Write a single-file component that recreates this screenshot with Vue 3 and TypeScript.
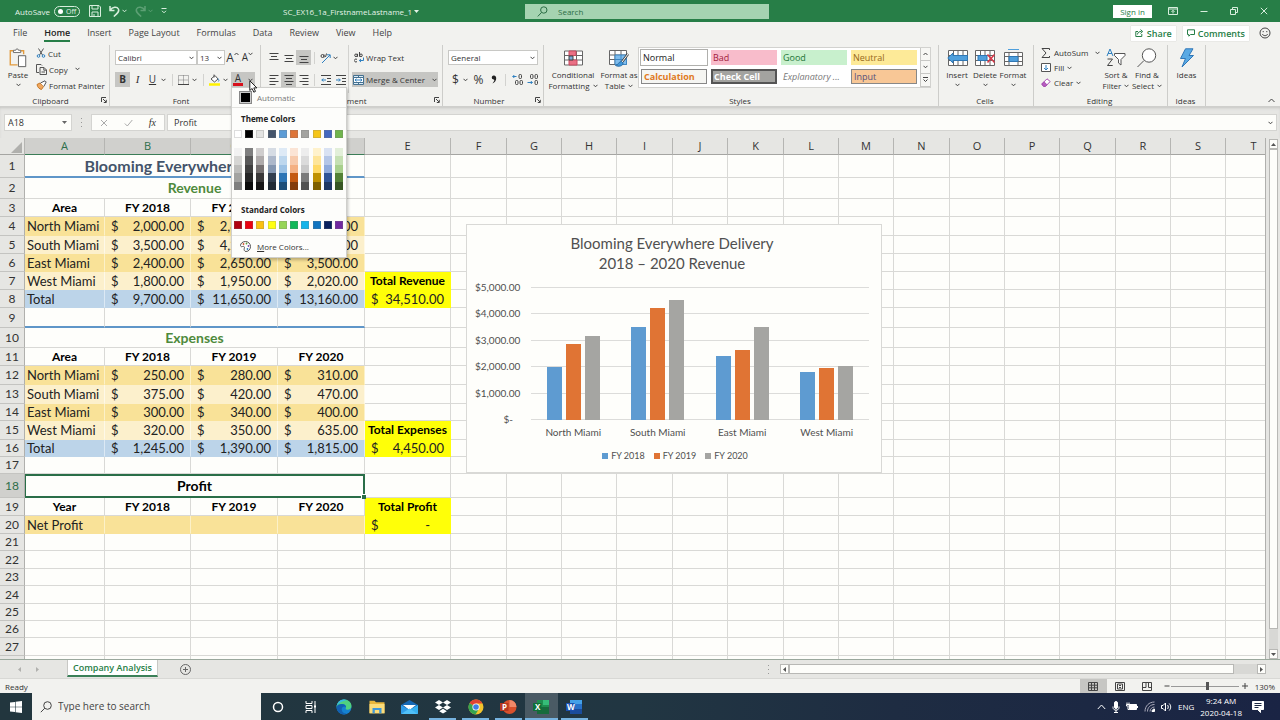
<script setup lang="ts">
import { computed, ref } from 'vue'

interface Cell {
  kind: string
  text?: string
  span?: number
}
interface Row {
  n: number | string
  h: number
  cells: Cell[]
}

const menuTabs = ['File', 'Home', 'Insert', 'Page Layout', 'Formulas', 'Data', 'Review', 'View', 'Help']
const cellStyles = [
  { name: 'Normal', cls: 'normal' },
  { name: 'Bad', cls: 'bad' },
  { name: 'Good', cls: 'good' },
  { name: 'Neutral', cls: 'neutral' },
  { name: 'Calculation', cls: 'calculation' },
  { name: 'Check Cell', cls: 'check' },
  { name: 'Explanatory ...', cls: 'explanatory' },
  { name: 'Input', cls: 'input' },
]

const themeColors = [
  { base: '#ffffff', shades: ['#f2f2f2', '#d6d6d4', '#bdbdbb', '#a3a3a1', '#7f7f7f'] },
  { base: '#000000', shades: ['#7f7f7f', '#595959', '#3f3f3f', '#262626', '#0c0c0c'] },
  { base: '#e4e4e2', shades: ['#cfcdcd', '#aeaaaa', '#757070', '#3a3838', '#171616'] },
  { base: '#44546a', shades: ['#d6dce4', '#adb8ca', '#8496b0', '#333f4f', '#222b35'] },
  { base: '#5b9bd5', shades: ['#deeaf6', '#bdd7ee', '#9cc2e5', '#2e75b5', '#1e4e79'] },
  { base: '#dd7539', shades: ['#fbe4d5', '#f7caac', '#f4b083', '#c45911', '#833c0b'] },
  { base: '#a3a3a0', shades: ['#ededed', '#dbdbdb', '#c9c9c9', '#7b7b7b', '#525252'] },
  { base: '#f5c518', shades: ['#fff2cc', '#fee599', '#ffd965', '#bf9000', '#7f6000'] },
  { base: '#4468bf', shades: ['#d9e2f3', '#b4c6e7', '#8eaadb', '#2f5496', '#1f3864'] },
  { base: '#70b54d', shades: ['#e2efd9', '#c5e0b3', '#a8d08d', '#538135', '#375623'] },
]
const standardColors = [
  '#b00010', '#ea0010', '#fbc010', '#ffff10', '#96d556', '#10b858', '#12b4ea', '#1074c0', '#08205e', '#7028a0',
]

const columns = [
  { name: 'A', w: 80 }, { name: 'B', w: 86 }, { name: 'C', w: 87 }, { name: 'D', w: 87 }, { name: 'E', w: 86 },
  { name: 'F', w: 56 }, { name: 'G', w: 55 }, { name: 'H', w: 55 }, { name: 'I', w: 56 }, { name: 'J', w: 55 },
  { name: 'K', w: 56 }, { name: 'L', w: 55 }, { name: 'M', w: 55 }, { name: 'N', w: 56 }, { name: 'O', w: 55 },
  { name: 'P', w: 55 }, { name: 'Q', w: 56 }, { name: 'R', w: 55 }, { name: 'S', w: 55 }, { name: 'T', w: 56 },
]
const tableWidth = computed(() => columns.reduce((sum, c) => sum + c.w, 25))

const blank: Cell = { kind: '' }
function head(...t: string[]): Cell[] {
  return t.map((text) => ({ kind: 'head', text }))
}
function data(fill: string, label: string, values: string[]): Cell[] {
  return [{ kind: `${fill} label`, text: label }, ...values.map((text) => ({ kind: `${fill} money`, text }))]
}

const rows: Row[] = [
  { n: 1, h: 23, cells: [{ kind: 'title', text: 'Blooming Everywhere Delivery', span: 4 }, blank] },
  { n: 2, h: 21, cells: [{ kind: 'section', text: 'Revenue', span: 4 }, blank] },
  { n: 3, h: 18, cells: [...head('Area', 'FY 2018', 'FY 2019', 'FY 2020'), blank] },
  { n: 4, h: 19, cells: [...data('dark', 'North Miami', ['2,000.00', '2,850.00', '3,140.00']), blank] },
  { n: 5, h: 18, cells: [...data('light', 'South Miami', ['3,500.00', '4,200.00', '4,500.00']), blank] },
  { n: 6, h: 18, cells: [...data('dark', 'East Miami', ['2,400.00', '2,650.00', '3,500.00']), blank] },
  { n: 7, h: 18, cells: [...data('light', 'West Miami', ['1,800.00', '1,950.00', '2,020.00']), { kind: 'bright head', text: 'Total Revenue' }] },
  { n: 8, h: 18, cells: [...data('blue', 'Total', ['9,700.00', '11,650.00', '13,160.00']), { kind: 'bright money', text: '34,510.00' }] },
  { n: 9, h: 20, cells: [{ kind: 'ruled' }, { kind: 'ruled' }, { kind: 'ruled' }, { kind: 'ruled' }, blank] },
  { n: 10, h: 20, cells: [{ kind: 'section', text: 'Expenses', span: 4 }, blank] },
  { n: 11, h: 18, cells: [...head('Area', 'FY 2018', 'FY 2019', 'FY 2020'), blank] },
  { n: 12, h: 19, cells: [...data('dark', 'North Miami', ['250.00', '280.00', '310.00']), blank] },
  { n: 13, h: 19, cells: [...data('light', 'South Miami', ['375.00', '420.00', '470.00']), blank] },
  { n: 14, h: 17, cells: [...data('dark', 'East Miami', ['300.00', '340.00', '400.00']), blank] },
  { n: 15, h: 19, cells: [...data('light', 'West Miami', ['320.00', '350.00', '635.00']), { kind: 'bright head', text: 'Total Expenses' }] },
  { n: 16, h: 17, cells: [...data('blue', 'Total', ['1,245.00', '1,390.00', '1,815.00']), { kind: 'bright money', text: '4,450.00' }] },
  { n: 17, h: 17, cells: [blank, blank, blank, blank, blank] },
  { n: 18, h: 24, cells: [{ kind: 'selected', text: 'Profit', span: 4 }, blank] },
  { n: 19, h: 18, cells: [...head('Year', 'FY 2018', 'FY 2019', 'FY 2020'), { kind: 'bright head', text: 'Total Profit' }] },
  { n: 20, h: 18, cells: [{ kind: 'dark label', text: 'Net Profit' }, { kind: 'dark' }, { kind: 'dark' }, { kind: 'dark' }, { kind: 'bright money dash', text: '-' }] },
  ...[17, 18, 17, 18, 17, 17, 18].map((h, i) => ({ n: 21 + i, h, cells: [blank, blank, blank, blank, blank] })),
  { n: '', h: 18, cells: [blank, blank, blank, blank, blank] },
]

const axis = ['$5,000.00', '$4,000.00', '$3,000.00', '$2,000.00', '$1,000.00', '$-']
const series = ['FY 2018', 'FY 2019', 'FY 2020']
const areas = [
  { name: 'North Miami', values: [2000, 2850, 3140] },
  { name: 'South Miami', values: [3500, 4200, 4500] },
  { name: 'East Miami', values: [2400, 2650, 3500] },
  { name: 'West Miami', values: [1800, 1950, 2020] },
]

const fontName = ref('Calibri')
const fontSize = ref('13')
const numberFormat = ref('General')
const cellRef = ref('A18')
const formula = ref('Profit')
const zoom = ref(55)
</script>

<template>
  <div class="window">
    <header class="titlebar">
      <div class="quick">
        <label class="autosave">AutoSave
          <span class="toggle"><input type="checkbox" aria-label="AutoSave" /><i></i>Off</span>
        </label>
        <button class="bare save" aria-label="Save">
          <svg width="12" height="12" viewBox="0 0 12 12"><path d="M.5.5h9.5l1.500 1.500v9.500H.5zM3 .5v3.500h6V.5M3 11.500V7h6v4.500M5 9v2" /></svg>
        </button>
        <button class="bare undo" aria-label="Undo">
          <svg width="11" height="12" viewBox="0 0 11 12"><path class="thick" d="M1 1v4.500h4.500M1.200 5.200C3.500 1.600 8 1.200 9.400 4c1.200 2.600-1 4.600-4.600 7.500" /></svg>
        </button>
        <svg class="chev" viewBox="0 0 5 4"><path d="M.5.8l2 2 2-2" /></svg>
        <button class="bare redo" aria-label="Redo">
          <svg width="11" height="12" viewBox="0 0 11 12"><path class="thick" d="M10 1v4.500H5.500M9.800 5.200C7.500 1.600 3 1.200 1.600 4c-1.200 2.600 1 4.600 4.600 7.500" /></svg>
          <svg class="chev" viewBox="0 0 5 4"><path d="M.5.8l2 2 2-2" /></svg>
        </button>
        <button class="bare custom" aria-label="Customize toolbar">
          <svg width="6" height="6" viewBox="0 0 6 6"><path d="M.5.5h5M1 2.800l2 2 2-2" /></svg>
        </button>
      </div>
      <div class="docname">SC_EX16_1a_FirstnameLastname_1 <svg class="caret" viewBox="0 0 5 3"><path d="M0 0h5L2.500 3z" /></svg></div>
      <label class="search">
        <svg width="11" height="11" viewBox="0 0 11 11"><circle cx="6.800" cy="4" r="3.200" /><path d="M4.500 6.500L.8 10.400" /></svg>
        <input type="text" placeholder="Search" aria-label="Search" />
      </label>
      <div class="wincontrols">
        <button class="signin">Sign in</button>
        <button class="bare" aria-label="Ribbon display options"><svg width="10" height="8" viewBox="0 0 10 8"><path d="M.5.5h9v7h-9zM.5 2h9M5 6.500V3.500M3.500 4.800L5 3.300l1.500 1.500" /></svg></button>
        <button class="bare" aria-label="Minimize"><svg width="8" height="8" viewBox="0 0 8 8"><path d="M.5 4.500h7" /></svg></button>
        <button class="bare" aria-label="Restore"><svg width="8" height="8" viewBox="0 0 8 8"><path d="M.5 2.500h5v5h-5zM2.500 2.500v-2h5v5h-2" /></svg></button>
        <button class="bare" aria-label="Close"><svg width="8" height="8" viewBox="0 0 8 8"><path d="M.8.8l6.400 6.400M7.200.8L.8 7.200" /></svg></button>
      </div>
    </header>

    <nav class="menutabs">
      <button v-for="t in menuTabs" :key="t" class="bare menutab" :class="{ current: t === 'Home' }">{{ t }}</button>
      <div class="sharing">
        <button class="share"><svg width="9" height="8" viewBox="0 0 9 8"><path d="M3 2.500H.8v5h6V5M2.500 5.500c.2-2.400 1.800-3 4-3M5.500.6l2.200 1.900-2.200 2" /></svg>Share</button>
        <button class="share"><svg width="8" height="8" viewBox="0 0 8 8"><path d="M.5.8h7v4.700H3.500L1.800 7.200V5.500H.5z" /></svg>Comments</button>
        <button class="bare smile" aria-label="Feedback"><svg width="12" height="12" viewBox="0 0 12 12"><circle cx="6" cy="6" r="5" /><path d="M4.200 4v1.200M7.800 4v1.200M3.300 7c1 2.200 4.400 2.200 5.400 0" /></svg></button>
      </div>
    </nav>

    <section class="ribbon">
      <div class="group clipboard">
        <div class="body">
          <button class="bare big paste">
            <svg width="20" height="22" viewBox="0 0 20 22"><path d="M5 3H1.500v15.500h8" stroke="#e29a3c" stroke-width="1.500" /><path d="M13 3h3.200v4" stroke="#e29a3c" stroke-width="1.500" /><path d="M5 5V2.500h2.500a1.500 1.500 0 013 0H13V5z" fill="#fff" stroke="#666" /><path d="M10.500 8.500h8v12h-8z" fill="#fff" stroke="#555" /></svg>
            <span>Paste</span>
            <svg class="chev" viewBox="0 0 5 4"><path d="M.5.8l2 2 2-2" /></svg>
          </button>
          <div class="list">
            <button class="bare"><svg width="10" height="10" viewBox="0 0 10 10"><path d="M2.500.5l4 6.500M7.500.5l-4 6.500" stroke="#555" /><circle cx="2.500" cy="8" r="1.300" stroke="#2f80c0" /><circle cx="7.500" cy="8" r="1.300" stroke="#2f80c0" /></svg>Cut</button>
            <button class="bare copy"><svg width="11" height="11" viewBox="0 0 11 11"><path d="M3 8.500H.5v-8h4.500L6 1.500M4 3.500h4l2.500 2.500v4.500H4zM7.800 3.500v2.700h2.700M5.500 8h3.500" stroke="#555" /></svg>Copy <svg class="chev" viewBox="0 0 5 4"><path d="M.5.8l2 2 2-2" /></svg></button>
            <button class="bare"><svg width="11" height="10" viewBox="0 0 11 10"><path d="M1 4.500l3-1.500 3.500 3.500-2 3C3.500 9 1.500 7.500 1 4.500z" fill="#f0a860" stroke="#c67826" /><path d="M4.500 3L9 .8l1.200 1.200L7.800 6.500" fill="#fff" stroke="#555" /></svg>Format Painter</button>
          </div>
        </div>
        <div class="caption"><span>Clipboard</span><svg class="launch" viewBox="0 0 6 6"><path d="M.5 5V.5H5M2 2l3 3M5.300 2.800v2.700H2.800" /></svg></div>
      </div>

      <div class="group font">
        <div class="body rows">
          <div class="line">
            <span class="pick fontname"><select v-model="fontName" aria-label="Font"><option>Calibri</option></select><svg class="chev" viewBox="0 0 5 4"><path d="M.5.8l2 2 2-2" /></svg></span>
            <span class="pick fontsize"><select v-model="fontSize" aria-label="Font size"><option>13</option></select><svg class="chev" viewBox="0 0 5 4"><path d="M.5.8l2 2 2-2" /></svg></span>
            <button class="bare tool grow" aria-label="Increase font size">A<svg class="tick" viewBox="0 0 5 4"><path d="M.5 3l2-2 2 2" /></svg></button>
            <button class="bare tool shrink" aria-label="Decrease font size">A<svg class="tick" viewBox="0 0 5 4"><path d="M.5.8l2 2 2-2" /></svg></button>
          </div>
          <div class="line">
            <button class="bare tool on"><b>B</b></button>
            <button class="bare tool"><i class="ital">I</i></button>
            <button class="bare tool"><u>U</u></button>
            <svg class="chev" viewBox="0 0 5 4"><path d="M.5.8l2 2 2-2" /></svg>
            <span class="bar"></span>
            <button class="bare tool" aria-label="Borders"><svg width="11" height="10" viewBox="0 0 11 10"><path d="M.5.5h10v9H.5zM5.500.5v9M.5 5h10" stroke="#777" stroke-dasharray="1 1" /><path d="M0 9.500h11" stroke="#444" /></svg></button>
            <svg class="chev" viewBox="0 0 5 4"><path d="M.5.8l2 2 2-2" /></svg>
            <span class="bar"></span>
            <button class="bare tool" aria-label="Fill color"><svg width="11" height="12" viewBox="0 0 11 12"><path d="M2 5l4-3.500L9 5 5.500 8zM5 .5v3" fill="#fff" stroke="#555" /><path d="M9 4.500c1 1.500 1.200 2.500.3 3" stroke="#2f80c0" /><path d="M0 10.500h11" stroke="#fff200" stroke-width="2.500" /></svg></button>
            <svg class="chev" viewBox="0 0 5 4"><path d="M.5.8l2 2 2-2" /></svg>
            <div class="fontcolor">
              <button class="bare inkbtn" aria-label="Font color"><span class="ink">A</span><svg class="chev" viewBox="0 0 5 4"><path d="M.5.8l2 2 2-2" /></svg></button>
              <svg class="pointer" width="9" height="13" viewBox="0 0 9 13"><path d="M.8.8v9.700l2.300-2 1.700 3.700 1.700-.8-1.700-3.500h3.100z" fill="#fff" stroke="#222" /></svg>
              <div class="palette">
                <button class="bare auto"><i></i>Automatic</button>
                <h3>Theme Colors</h3>
                <div class="swatches">
                  <button v-for="c in themeColors" :key="c.base" class="swatch" :style="{ background: c.base }" :aria-label="c.base"></button>
                </div>
                <div class="shades">
                  <div v-for="c in themeColors" :key="c.base">
                    <button v-for="s in c.shades" :key="s" :style="{ background: s }" :aria-label="s"></button>
                  </div>
                </div>
                <h3 class="std">Standard Colors</h3>
                <div class="swatches last">
                  <button v-for="c in standardColors" :key="c" class="swatch" :style="{ background: c }" :aria-label="c"></button>
                </div>
                <button class="bare more"><svg width="11" height="11" viewBox="0 0 11 11"><path d="M5.500.5c-3 0-5 2-5 4 0 1 1 1.500 2 1 1.500-.6 2.300.5 1.800 1.800C3.800 9 4.500 10.500 6 10.500c2.800 0 4.500-2.500 4.500-5s-2-5-5-5z" fill="#fff" stroke="#555" /><circle cx="3.500" cy="3" r=".9" fill="#d65532" stroke="none" /><circle cx="6.500" cy="2.500" r=".9" fill="#5b9b3d" stroke="none" /><circle cx="8.500" cy="5" r=".9" fill="#7d4aa8" stroke="none" /><circle cx="7.500" cy="8" r=".9" fill="#2f80c0" stroke="none" /></svg><span><u>M</u>ore Colors...</span></button>
              </div>
            </div>
          </div>
        </div>
        <div class="caption"><span>Font</span><svg class="launch" viewBox="0 0 6 6"><path d="M.5 5V.5H5M2 2l3 3M5.300 2.800v2.700H2.800" /></svg></div>
      </div>

      <div class="group align">
        <div class="alignbody">
          <div class="rows">
            <div class="line">
              <button class="bare tool" aria-label="Top align"><svg width="10" height="10" viewBox="0 0 10 10"><path d="M.5.5h9M2 3.500h6M.5 6.500h9" /></svg></button>
              <button class="bare tool" aria-label="Middle align"><svg width="10" height="10" viewBox="0 0 10 10"><path d="M.5 2.500h9M2 5.500h6M.5 8.500h9" /></svg></button>
              <button class="bare tool on" aria-label="Bottom align"><svg width="10" height="10" viewBox="0 0 10 10"><path d="M.5 3.500h9M2 6.500h6M.5 9.500h9" /></svg></button>
              <span class="bar"></span>
              <button class="bare tool" aria-label="Orientation"><svg width="12" height="12" viewBox="0 0 12 12"><path d="M2 11l8-8M7 2.800h3.200V6" stroke="#2f80c0" /><circle cx="2.500" cy="4" r="1.500" /><path d="M4 2.500v3M5.500 5l1-3.500" /></svg></button>
              <svg class="chev" viewBox="0 0 5 4"><path d="M.5.8l2 2 2-2" /></svg>
            </div>
            <div class="line">
              <button class="bare tool" aria-label="Align left"><svg width="10" height="10" viewBox="0 0 10 10"><path d="M.5.5h9M.5 3.500h6M.5 6.500h9M.5 9.500h6" /></svg></button>
              <button class="bare tool on" aria-label="Center"><svg width="10" height="10" viewBox="0 0 10 10"><path d="M.5.5h9M2 3.500h6M.5 6.500h9M2 9.500h6" /></svg></button>
              <button class="bare tool" aria-label="Align right"><svg width="10" height="10" viewBox="0 0 10 10"><path d="M.5.5h9M3.500 3.500h6M.5 6.500h9M3.500 9.500h6" /></svg></button>
              <span class="bar"></span>
              <button class="bare tool" aria-label="Decrease indent"><svg width="10" height="10" viewBox="0 0 10 10"><path d="M0 .5h10M6 3.500h4M6 6.500h4M0 9.500h10" /><path d="M5 5H.8M2.300 3.500L.8 5l1.500 1.500" stroke="#2f80c0" /></svg></button>
              <button class="bare tool" aria-label="Increase indent"><svg width="10" height="10" viewBox="0 0 10 10"><path d="M0 .5h10M6 3.500h4M6 6.500h4M0 9.500h10" /><path d="M0 5h4.200M2.800 3.500L4.300 5 2.800 6.500" stroke="#2f80c0" /></svg></button>
            </div>
          </div>
          <div class="rows wraps">
            <div class="line">
              <button class="bare wrap"><svg width="10" height="11" viewBox="0 0 10 11"><circle cx="2" cy="3.300" r="1.300" /><path d="M3.500 1.800v3M5.500 0v4.700M3 7.500a1.500 1.500 0 100 2" /><circle cx="7" cy="3.300" r="1.300" /><path d="M9.500 5.500v3h-4M7 7L5.300 8.500 7 10" stroke="#2f80c0" /></svg>Wrap Text</button>
            </div>
            <div class="line">
              <button class="bare merge"><svg width="11" height="10" viewBox="0 0 11 10"><path d="M.5.5h10v9H.5zM5.500.5v2M5.500 7.500v2" fill="#dcecf8" stroke="#44708f" /><path d="M.5 2.500h10v5H.5z" fill="#fff" stroke="#44708f" /><path d="M2 5h7M3.500 3.700L2 5l1.500 1.300M7.500 3.700L9 5 7.500 6.300" stroke="#2f80c0" /></svg>Merge &amp; Center<svg class="chev" viewBox="0 0 5 4"><path d="M.5.8l2 2 2-2" /></svg></button>
            </div>
          </div>
        </div>
        <div class="caption"><span>Alignment</span><svg class="launch" viewBox="0 0 6 6"><path d="M.5 5V.5H5M2 2l3 3M5.300 2.800v2.700H2.800" /></svg></div>
      </div>

      <div class="group number">
        <div class="body rows">
          <div class="line">
            <span class="pick format"><select v-model="numberFormat" aria-label="Number format"><option>General</option></select><svg class="chev" viewBox="0 0 5 4"><path d="M.5.8l2 2 2-2" /></svg></span>
          </div>
          <div class="line">
            <button class="bare tool glyph">$</button>
            <svg class="chev" viewBox="0 0 5 4"><path d="M.5.8l2 2 2-2" /></svg>
            <button class="bare tool glyph pct">%</button>
            <button class="bare tool" aria-label="Comma style"><svg width="6" height="9" viewBox="0 0 6 9"><path d="M3 .5a2 2 0 00-.5 4c.8 0 1 .5.600 1.500L1.500 8.500C4 7.500 5.300 5.500 5.200 3 5.100 1.500 4.300.5 3 .5z" fill="#222" stroke="none" /></svg></button>
            <span class="bar"></span>
            <button class="bare tool" aria-label="Increase decimal"><svg width="11" height="11" viewBox="0 0 11 11"><path d="M4.500 2.500H.8M2.300 1L.8 2.500 2.300 4" stroke="#2f80c0" /><rect x="7" y=".5" width="2.500" height="4" rx="1" /><rect x="3.500" y="6.500" width="2.500" height="4" rx="1" /><rect x="8" y="6.500" width="2.500" height="4" rx="1" /></svg></button>
            <button class="bare tool" aria-label="Decrease decimal"><svg width="11" height="11" viewBox="0 0 11 11"><rect x="3.500" y=".5" width="2.500" height="4" rx="1" /><rect x="8" y=".5" width="2.500" height="4" rx="1" /><path d="M.5 8.500h4.800M3.800 7l1.500 1.500L3.800 10" stroke="#2f80c0" /><rect x="8" y="6.500" width="2.500" height="4" rx="1" /></svg></button>
          </div>
        </div>
        <div class="caption"><span>Number</span><svg class="launch" viewBox="0 0 6 6"><path d="M.5 5V.5H5M2 2l3 3M5.300 2.800v2.700H2.800" /></svg></div>
      </div>

      <div class="group styles">
        <div class="body">
          <button class="bare big cond">
            <svg width="19" height="17" viewBox="0 0 19 17"><path d="M.5 1.500h18v14H.5zM.5 6h18M.5 10.500h18M6.500 1.500v14M12.500 1.500v14" fill="#fff" stroke="#666" /><path d="M5 1.500h7V6H5zM5 10.500h8v5H5z" fill="#ea7085" stroke="#c84a60" /><path d="M5 6.500h4v4H5z" fill="#7aa8d8" /></svg>
            <span>Conditional<br />Formatting <svg class="chev" viewBox="0 0 5 4"><path d="M.5.8l2 2 2-2" /></svg></span>
          </button>
          <button class="bare big fmt">
            <svg width="20" height="18" viewBox="0 0 20 18"><path d="M.5 1.500h17v14H.5zM.5 6h17M.5 10.500h17M6 1.500v14M12 1.500v14" fill="#fff" stroke="#666" /><path d="M6 6h11.500v9.500H6z" fill="#7fbcec" stroke="#3f87c4" /><path d="M6 10.500h11M12 6v9" stroke="#3f87c4" /><path d="M19 5l-6 8" stroke="#444" stroke-width="2.500" /><path d="M19 5l-6 8" stroke="#fff" /><path d="M12.500 12.500c-3 0-3 3.500-6 4 3 1.500 8 .5 7.500-2.500z" fill="#3f97dc" stroke="#2f6fa4" /></svg>
            <span>Format as<br />Table <svg class="chev" viewBox="0 0 5 4"><path d="M.5.8l2 2 2-2" /></svg></span>
          </button>
          <div class="gallery">
            <div class="items">
              <button v-for="s in cellStyles" :key="s.name" class="style" :class="s.cls">{{ s.name }}</button>
            </div>
            <div class="arrows">
              <button aria-label="Previous styles"><svg class="chev" viewBox="0 0 5 4"><path d="M.5 3l2-2 2 2" /></svg></button>
              <button aria-label="Next styles"><svg class="chev" viewBox="0 0 5 4"><path d="M.5.8l2 2 2-2" /></svg></button>
              <button aria-label="All styles"><svg width="5" height="6" viewBox="0 0 5 6"><path d="M0 .5h5M.5 2.500l2 2 2-2" /></svg></button>
            </div>
          </div>
        </div>
        <div class="caption"><span>Styles</span></div>
      </div>

      <div class="group cells">
        <div class="body">
          <button class="bare big cellbtn">
            <svg width="21" height="18" viewBox="0 0 21 18"><path d="M1.500 1.500h19v15h-19zM1.500 6.500h19M1.500 11.500h19M6.500 1.500v15M11 1.500v15M16 1.500v15" fill="#fff" stroke="#666" /><path d="M20.500 6.500H6V4L.8 9 6 14v-2.500h14.500z" fill="#4f9fdc" stroke="#2f77b4" /></svg>
            <span>Insert</span><svg class="chev" viewBox="0 0 5 4"><path d="M.5.8l2 2 2-2" /></svg>
          </button>
          <button class="bare big cellbtn">
            <svg width="21" height="18" viewBox="0 0 21 18"><path d="M.5 1.500h19v15H.5zM.5 6.500h19M.5 11.500h19M5.500 1.500v15M10 1.500v15M15 1.500v15" fill="#fff" stroke="#666" /><path d="M3 6.500h9v5H3z" fill="#4f9fdc" stroke="#2f77b4" /><path d="M12.500 5.500l7 8M19.500 5.500l-7 8" stroke="#d83848" stroke-width="1.500" /></svg>
            <span>Delete</span><svg class="chev" viewBox="0 0 5 4"><path d="M.5.8l2 2 2-2" /></svg>
          </button>
          <button class="bare big cellbtn">
            <svg width="21" height="18" viewBox="0 0 21 18"><path d="M5 .5h11" stroke="#4f9fdc" /><path d="M1.500 3.500h18v13h-18zM1.500 7.500h18M1.500 12.500h18M6 3.500v13M15 3.500v13" fill="#fff" stroke="#666" /><path d="M6 7.500h9v5H6z" fill="#4f9fdc" stroke="#2f77b4" /></svg>
            <span>Format</span><svg class="chev" viewBox="0 0 5 4"><path d="M.5.8l2 2 2-2" /></svg>
          </button>
        </div>
        <div class="caption"><span>Cells</span></div>
      </div>

      <div class="group editing">
        <div class="body">
          <div class="list edit">
            <button class="bare autosum"><svg width="10" height="10" viewBox="0 0 10 10"><path d="M8.500 2V.5h-7.500L5 5 1 9.500h7.500V8" stroke="#444" /></svg>AutoSum <svg class="chev" viewBox="0 0 5 4"><path d="M.5.8l2 2 2-2" /></svg></button>
            <button class="bare"><svg width="10" height="9" viewBox="0 0 10 9"><path d="M.5.5h9v8h-9z" fill="#fff" stroke="#555" /><path d="M5 2v5M3 5l2 2 2-2" stroke="#2f80c0" /></svg>Fill <svg class="chev" viewBox="0 0 5 4"><path d="M.5.8l2 2 2-2" /></svg></button>
            <button class="bare"><svg width="10" height="9" viewBox="0 0 10 9"><path d="M.8 6L6 .8 9.200 3.500 4.500 8.300H2.500z" fill="#fff" stroke="#a64cb0" /><path d="M.8 6l2.200-2.200L6 6.800 4.500 8.300h-2z" fill="#b75cc0" stroke="#a64cb0" /></svg>Clear <svg class="chev" viewBox="0 0 5 4"><path d="M.5.8l2 2 2-2" /></svg></button>
          </div>
          <button class="bare big sort">
            <svg width="20" height="20" viewBox="0 0 20 20"><path d="M1 8l3-7 3 7M2 5.500h4" stroke="#2f80c0" /><path d="M1.500 11h5l-5 6.500h5.200" stroke="#444" /><path d="M8.500 5.500h10.500v2l-4 4v5.500l-2.500-2v-3.500l-4-4z" fill="#fff" stroke="#555" /></svg>
            <span>Sort &amp;<br />Filter <svg class="chev" viewBox="0 0 5 4"><path d="M.5.8l2 2 2-2" /></svg></span>
          </button>
          <button class="bare big find">
            <svg width="20" height="20" viewBox="0 0 20 20"><circle cx="12" cy="7.500" r="6.700" fill="#fff" stroke="#555" /><path d="M7 12.500L.5 19" stroke="#555" /></svg>
            <span>Find &amp;<br />Select <svg class="chev" viewBox="0 0 5 4"><path d="M.5.8l2 2 2-2" /></svg></span>
          </button>
        </div>
        <div class="caption"><span>Editing</span></div>
      </div>

      <div class="group ideas">
        <div class="body">
          <button class="bare big idea">
            <svg width="16" height="20" viewBox="0 0 16 20"><path d="M6.500.8h7.500L10 7.500h4.500L3 19l3.500-8.500H1.500z" fill="#5aaae4" stroke="#2f77b8" /></svg>
            <span>Ideas</span>
          </button>
        </div>
        <div class="caption"><span>Ideas</span></div>
      </div>
      <button class="bare collapse" aria-label="Collapse ribbon"><svg width="7" height="5" viewBox="0 0 7 5"><path d="M.5 4l3-3 3 3" /></svg></button>
    </section>

    <section class="formulabar">
      <label class="namebox"><input v-model="cellRef" type="text" aria-label="Name box" /><svg class="caret" viewBox="0 0 5 3"><path d="M0 0h5L2.500 3z" /></svg></label>
      <span class="dots"></span>
      <div class="fx">
        <button class="bare" aria-label="Cancel"><svg width="8" height="8" viewBox="0 0 8 8"><path d="M1 1l6 6M7 1L1 7" stroke="#aaa" /></svg></button>
        <button class="bare" aria-label="Enter"><svg width="9" height="8" viewBox="0 0 9 8"><path d="M.8 4.500l2.500 2.500L8.300 1" stroke="#aaa" /></svg></button>
        <button class="bare fxbtn">fx</button>
      </div>
      <label class="formula"><input v-model="formula" type="text" aria-label="Formula" /><svg class="chev" viewBox="0 0 5 4"><path d="M.5.8l2 2 2-2" /></svg></label>
    </section>

    <main class="workspace">
      <div class="sheet">
        <table :style="{ width: tableWidth + 'px' }">
          <colgroup>
            <col class="rowhead" />
            <col v-for="c in columns" :key="c.name" :style="{ width: c.w + 'px' }" />
          </colgroup>
          <thead>
            <tr>
              <th class="corner"><svg width="11" height="11" viewBox="0 0 11 11"><path d="M11 0v11H0z" /></svg></th>
              <th v-for="(c, i) in columns" :key="c.name" scope="col" :class="{ sel: i < 4 }">{{ c.name }}</th>
            </tr>
          </thead>
          <tbody>
            <tr v-for="r in rows" :key="r.n" :style="{ height: r.h + 'px' }">
              <th scope="row" :class="{ sel: r.n === 18 }">{{ r.n }}</th>
              <td v-for="(c, i) in r.cells" :key="i" :class="c.kind" :colspan="c.span ?? 1">
                <div v-if="c.kind.includes('money')" class="acct"><span>$</span><span>{{ c.text }}</span></div>
                <div v-else-if="c.text" class="txt">{{ c.text }}</div>
                <i v-if="c.kind === 'selected'" class="handle"></i>
              </td>
              <td v-for="k in 15" :key="'e' + k"></td>
            </tr>
          </tbody>
        </table>

        <figure class="chart">
          <figcaption>Blooming Everywhere Delivery<br />2018 – 2020 Revenue</figcaption>
          <div class="plotrow">
            <div class="yaxis"><span v-for="a in axis" :key="a" :class="{ zero: a === '$-' }">{{ a }}</span></div>
            <div class="plot">
              <div class="lines"><i v-for="a in axis" :key="a"></i></div>
              <div v-for="a in areas" :key="a.name" class="cluster">
                <b v-for="(v, i) in a.values" :key="i" :class="'s' + i" :style="{ height: v / 50 + '%' }"></b>
              </div>
            </div>
          </div>
          <div class="xaxis"><span v-for="a in areas" :key="a.name">{{ a.name }}</span></div>
          <div class="legend"><span v-for="(s, i) in series" :key="s"><i :class="'s' + i"></i>{{ s }}</span></div>
        </figure>
      </div>
      <div class="vscroll">
        <button aria-label="Scroll up"><svg width="5" height="3" viewBox="0 0 5 3"><path d="M0 3h5L2.500 0z" /></svg></button>
        <div class="track"><div class="thumb"></div></div>
        <button aria-label="Scroll down"><svg width="5" height="3" viewBox="0 0 5 3"><path d="M0 0h5L2.500 3z" /></svg></button>
      </div>
    </main>

    <section class="sheetbar">
      <button class="bare nav" aria-label="Previous sheet"><svg width="3" height="5" viewBox="0 0 3 5"><path d="M3 0v5L0 2.500z" /></svg></button>
      <button class="bare nav" aria-label="Next sheet"><svg width="3" height="5" viewBox="0 0 3 5"><path d="M0 0v5l3-2.500z" /></svg></button>
      <button class="sheettab">Company Analysis</button>
      <button class="bare add" aria-label="New sheet"><svg width="11" height="11" viewBox="0 0 11 11"><circle cx="5.500" cy="5.500" r="5" /><path d="M5.500 3v5M3 5.500h5" /></svg></button>
      <span class="dots"></span>
      <div class="hscroll">
        <button aria-label="Scroll left"><svg width="3" height="5" viewBox="0 0 3 5"><path d="M3 0v5L0 2.500z" /></svg></button>
        <div class="track"><div class="thumb"></div></div>
        <button aria-label="Scroll right"><svg width="3" height="5" viewBox="0 0 3 5"><path d="M0 0v5l3-2.500z" /></svg></button>
      </div>
    </section>

    <section class="status">
      <span class="ready">Ready</span>
      <button class="bare view on" aria-label="Normal view"><svg width="10" height="9" viewBox="0 0 10 9"><path d="M.5.5h9v8h-9zM.5 3.200h9M.5 5.800h9M3.500.5v8M6.500.5v8" /></svg></button>
      <button class="bare view" aria-label="Page layout"><svg width="10" height="9" viewBox="0 0 10 9"><path d="M.5.5h9v8h-9zM2.500 2h5v5h-5zM4 3.500h2M4 5.500h2" /></svg></button>
      <button class="bare view" aria-label="Page break preview"><svg width="10" height="9" viewBox="0 0 10 9"><path d="M.5.5h9v8h-9zM.5 5.500h3.500v-5M6.500.5v5h3" /></svg></button>
      <button class="bare step" aria-label="Zoom out"><svg width="6" height="6" viewBox="0 0 6 6"><path d="M.5 3h5" /></svg></button>
      <input v-model="zoom" type="range" min="0" max="100" aria-label="Zoom" />
      <button class="bare step" aria-label="Zoom in"><svg width="6" height="6" viewBox="0 0 6 6"><path d="M0 3h6M3 0v6" /></svg></button>
      <span class="pct">130%</span>
    </section>

    <footer class="taskbar">
      <button class="bare start" aria-label="Start"><svg width="12" height="12" viewBox="0 0 12 12"><path d="M0 1.600L5 .9v4.800H0zM5.600.8L12 0v5.700H5.600zM0 6.300h5v4.800l-5-.7zM5.600 6.300H12V12l-6.400-.8z" fill="#fff" stroke="none" /></svg></button>
      <label class="tasksearch"><svg width="12" height="12" viewBox="0 0 12 12"><circle cx="7.500" cy="4.500" r="3.800" /><path d="M4.800 7.200L.8 11.200" /></svg><input type="text" placeholder="Type here to search" aria-label="Type here to search" /></label>
      <button class="bare app" aria-label="Cortana"><svg width="12" height="12" viewBox="0 0 12 12"><circle cx="6" cy="6" r="4.500" stroke="#fff" stroke-width="1.500" /></svg></button>
      <button class="bare app" aria-label="Task view"><svg width="12" height="12" viewBox="0 0 12 12"><path d="M1 0v2.500h6V0M1 12V9.500h6V12M1 4.500h6v3H1zM10 0v12" stroke="#fff" /><path d="M9 4.500h2v2H9z" fill="#fff" /></svg></button>
      <button class="bare app" aria-label="Edge"><svg width="16" height="16" viewBox="0 0 16 16"><circle cx="8" cy="8" r="7.500" fill="#1582d0" /><path d="M.5 8C1 3.500 4 .5 8 .5c4.500 0 7.500 3 7.500 6.500 0 2.500-2 3.800-4 3.800-1.800 0-2.300-.8-1.500-2C10.500 6.500 8.500 5 6 5 3.500 5 1 6 .5 8z" fill="#4fd080" /><path d="M.5 8C1 3.500 4 .5 8 .5c1 0 2 .2 3 .6C7 2 1.500 4 .5 8z" fill="#38b8e4" /><path d="M.5 8C1 6 3.500 5 6 5c2.500 0 4 1.500 4 3-2-1.500-4.500 0-4.300 2.500.2 3 3 4.500 5.800 3.800C7 17.500.5 13.500.5 8z" fill="#1260b0" /></svg></button>
      <button class="bare app" aria-label="File Explorer"><svg width="16" height="14" viewBox="0 0 16 14"><path d="M.5.8h5l1.500 1.500h8.500v11H.5z" fill="#e8b63c" /><path d="M.5 4h15v9.300H.5z" fill="#fbdc7a" /><path d="M3.500 13.300V8h9v5.300h-2.300V10H5.800v3.300z" fill="#3f97d8" /></svg></button>
      <button class="bare app" aria-label="Mail"><svg width="17" height="14" viewBox="0 0 17 14"><path d="M0 5L8.500 0 17 5v9H0z" fill="#1668b4" /><path d="M2 5h13l-6.500 5z" fill="#fff" /><path d="M0 5l8.500 5L0 14z" fill="#2f9ce8" /><path d="M17 5l-8.500 5L17 14z" fill="#36b0f0" /><path d="M0 14l8.500-5.500L17 14z" fill="#50c0f8" /></svg></button>
      <button class="bare app run" aria-label="Dropbox"><svg width="16" height="14" viewBox="0 0 16 14"><path d="M4 0l4 2.500L4 5 0 2.500zM12 0l4 2.500L12 5 8 2.500zM4 5l4 2.500L4 10 0 7.500zM12 5l4 2.500-4 2.500-4-2.500zM8 8.800l3.800 2.400L8 13.600l-3.800-2.400z" fill="#fff" /></svg></button>
      <button class="bare app run" aria-label="Chrome"><svg width="16" height="16" viewBox="0 0 16 16"><circle cx="8" cy="8" r="7.500" fill="#f2c42c" /><path d="M8 8L1.500 4.200A7.500 7.500 0 0114.500 4.500H8z" fill="#e04434" /><path d="M1.500 4.200A7.500 7.500 0 007.500 15.500L11 9.800 8 8z" fill="#35a450" /><circle cx="8" cy="8" r="3.600" fill="#fff" /><circle cx="8" cy="8" r="2.800" fill="#3f7fe4" /></svg></button>
      <button class="bare app run" aria-label="PowerPoint"><svg width="17" height="16" viewBox="0 0 17 16"><circle cx="9.500" cy="8" r="7" fill="#d8502c" /><path d="M9.500 1a7 7 0 017 7h-7z" fill="#f08868" /><path d="M0 4h8.500v8H0z" fill="#b83820" /><text x="2" y="11">P</text></svg></button>
      <button class="bare app run active" aria-label="Excel"><svg width="17" height="16" viewBox="0 0 17 16"><path d="M4 1h12v14H4z" fill="#1f8f50" /><path d="M10 1h6v5h-6z" fill="#36bd78" /><path d="M4 8h12v7H4z" fill="#176b3c" /><path d="M0 4h8.500v8H0z" fill="#107038" /><text x="2" y="11">X</text></svg></button>
      <button class="bare app run" aria-label="Word"><svg width="17" height="16" viewBox="0 0 17 16"><path d="M4 1h12v14H4z" fill="#2870c8" /><path d="M4 1h12v4H4z" fill="#44a0e8" /><path d="M4 10h12v5H4z" fill="#1a4c9c" /><path d="M0 4h8.500v8H0z" fill="#1a50b0" /><text x="1" y="11">W</text></svg></button>
      <div class="tray">
        <svg width="9" height="6" viewBox="0 0 9 6"><path d="M.8 5l3.700-4 3.700 4" /></svg>
        <svg width="8" height="12" viewBox="0 0 8 12"><rect x="2.500" y=".5" width="3" height="7" rx="1.500" fill="#fff" /><path d="M1 5.500v1c0 3.500 6 3.500 6 0v-1M4 9v2M2 11.500h4" /></svg>
        <svg width="12" height="9" viewBox="0 0 12 9"><path d="M3.500 2.500h7v5h-7z" fill="#fff" /><path d="M11.500 4v2M1 .5v2M3 .5v2M.5 2.500h3v1.500h-3zM2 4.500v3h1.500" /></svg>
        <svg width="11" height="11" viewBox="0 0 11 11"><path d="M1 10.500C1 5 5 1 10.500 1M3.500 10.500c0-4 3-7 7-7M6 10.500c0-2.500 2-4.500 4.500-4.500" stroke="#aab" /><path d="M8 10.500c0-1.500 1-2.500 2.500-2.500v2.500z" fill="#fff" /></svg>
        <svg width="11" height="10" viewBox="0 0 11 10"><path d="M.5 3.500H2L4.500 1v8L2 6.500H.5zM6.500 3c1 1 1 3 0 4M8.200 1.500c2 2 2 5 0 7" /></svg>
        <span class="lang">ENG</span>
        <span class="clock">9:24 AM<br />2020-04-18</span>
        <svg class="note" width="12" height="12" viewBox="0 0 12 12"><path d="M.5.5h11v8h-3v3l-3-3h-5z" fill="#fff" /><path d="M2.500 2.500h7M2.500 4.500h7M2.500 6.500h4" stroke="#1c2844" /></svg>
      </div>
    </footer>
  </div>
</template>

<style>
html,
body,
#app {
  height: 100%;
}
body {
  margin: 0;
  overflow: hidden;
}
</style>

<style scoped>
* {
  box-sizing: border-box;
}
.window {
  display: flex;
  flex-direction: column;
  height: 100%;
  background: #e6e6e3;
  color: #333;
  font: 8px/11px "Open Sans", "Noto Sans", sans-serif;
}
button,
input,
select {
  margin: 0;
  padding: 0;
  border: 0;
  border-radius: 0;
  font: inherit;
  color: inherit;
}
input,
select {
  background: none;
  outline: none;
  min-width: 0;
}
button {
  display: flex;
  align-items: center;
  justify-content: center;
  background: none;
  white-space: nowrap;
}
svg {
  fill: none;
  stroke: #444;
  flex: none;
}
.chev {
  width: 5px;
  height: 4px;
}
.caret {
  width: 5px;
  height: 3px;
  fill: #666;
  stroke: none;
}

/* title bar */
.titlebar {
  display: grid;
  grid-template-columns: 283fr 242fr 244fr 511fr;
  align-items: center;
  height: 22px;
  flex: none;
  background: #277e47;
  color: #e4f3e8;
}
.titlebar svg {
  stroke: #d8eedd;
}
.titlebar .caret {
  fill: #e4f3e8;
  stroke: none;
  margin-left: 2px;
}
.docname {
  display: flex;
  align-items: center;
}
.quick {
  display: flex;
  align-items: center;
  padding-left: 15px;
}
.autosave {
  display: flex;
  align-items: center;
  gap: 4px;
}
.toggle {
  display: flex;
  align-items: center;
  gap: 3px;
  width: 26px;
  height: 11px;
  padding-left: 3px;
  border: 1px solid #d8eedd;
  border-radius: 6px;
  font-size: 7px;
}
.toggle input {
  position: absolute;
  opacity: 0;
  width: 20px;
}
.toggle i {
  width: 5px;
  height: 5px;
  border-radius: 3px;
  background: #fff;
}
.save {
  margin-left: 9px;
}
.undo {
  margin: 0 2px 0 8px;
}
.thick {
  stroke-width: 1.5;
}
.redo {
  gap: 2px;
  margin-left: 8px;
  opacity: 0.3;
}
.custom {
  margin-left: 8px;
}
.search {
  display: flex;
  align-items: center;
  gap: 10px;
  height: 15px;
  padding-left: 12px;
  background: #a5d3b1;
}
.search svg {
  stroke: #2c6e45;
}
.search input {
  flex: 1;
}
.search input::placeholder {
  color: #2c6e45;
  opacity: 1;
}
.wincontrols {
  display: flex;
  align-items: center;
  justify-content: flex-end;
  gap: 22px;
  padding-right: 12px;
}
.signin {
  width: 39px;
  height: 13px;
  margin-right: -6px;
  background: #fff;
  color: #277e47;
}

/* tabs */
.menutabs {
  display: flex;
  align-items: center;
  gap: 17px;
  height: 22px;
  flex: none;
  padding: 0 9px 0 13px;
  background: #f2f2ef;
  font-size: 9px;
}
.menutab {
  height: 17px;
  border-bottom: 2px solid transparent;
  color: #444;
}
.menutab.current {
  border-color: #277e47;
  color: #222;
  font-weight: 600;
}
.sharing {
  display: flex;
  align-items: center;
  gap: 7px;
  margin-left: auto;
}
.share {
  gap: 3px;
  height: 15px;
  padding: 0 4px;
  background: #fff;
  color: #277e47;
  font-weight: 600;
  box-shadow: 0 0 1px #bbb;
}
.share svg {
  stroke: #277e47;
}
.smile {
  margin-left: 3px;
}

/* ribbon */
.ribbon {
  display: flex;
  align-items: flex-start;
  position: relative;
  z-index: 2;
  height: 63px;
  flex: none;
  background: #f2f2ef;
  border-bottom: 1px solid #cfcfcc;
}
.group {
  display: flex;
  flex-direction: column;
  height: 61px;
  margin-top: 1px;
  border-right: 1px solid #cdcdca;
  flex: none;
}
.clipboard { width: 110px; }
.font { width: 151px; }
.align { width: 182px; }
.number { width: 101px; }
.styles { width: 395px; }
.cells { width: 95px; }
.editing { width: 134px; }
.ideas { width: 38px; }
.body,
.alignbody {
  display: flex;
  flex: 1;
  align-items: flex-start;
}
.caption {
  display: flex;
  align-items: center;
  height: 12px;
  padding-right: 2px;
}
.caption span {
  flex: 1;
  text-align: center;
}
.launch {
  width: 6px;
  height: 6px;
}
.big {
  flex-direction: column;
  justify-content: flex-start;
  gap: 1px;
  padding-top: 3px;
  text-align: center;
}
.big > svg:first-child {
  height: 20px;
}
.big .chev {
  margin-top: 2px;
}
.big span .chev {
  margin: 0 0 1px 1px;
}
.paste {
  width: 36px;
}
.list {
  display: flex;
  flex-direction: column;
  align-items: flex-start;
}
.list button {
  gap: 2px;
  height: 16px;
}
.copy .chev {
  margin-left: 5px;
}
.rows {
  display: flex;
  flex-direction: column;
  padding: 5px 0 0 5px;
  gap: 7px;
}
.line {
  display: flex;
  align-items: center;
  height: 15px;
}
.tool {
  width: 15px;
  height: 15px;
  font-size: 10px;
}
.on {
  background: #c6c6c3;
}
.ital {
  font-family: "Liberation Serif", serif;
  font-size: 11px;
}
.bar {
  width: 1px;
  height: 12px;
  margin: 0 4px;
  background: #d2d2cf;
}
.pick {
  display: flex;
  align-items: center;
  position: relative;
  height: 15px;
  background: #fff;
  border: 1px solid #c8c8c5;
}
.pick select {
  appearance: none;
  width: 100%;
  padding-left: 2px;
}
.pick .chev {
  position: absolute;
  right: 2px;
  pointer-events: none;
}
.fontname { width: 82px; }
.fontsize { width: 28px; }
.format { width: 90px; }
.grow {
  font-size: 12px;
}
.tick {
  align-self: flex-start;
  width: 5px;
  height: 4px;
  margin-top: 2px;
}
.font .bar,
.align .bar {
  margin: 0 3px;
}
.font .tool + .chev {
  margin: 0 3px 0 1px;
}
.fontcolor {
  position: relative;
}
.inkbtn {
  gap: 5px;
  width: 24px;
  height: 15px;
  background: #c6c6c3;
}
.ink {
  width: 10px;
  font-size: 10px;
  line-height: 9px;
  border-bottom: 3px solid #d8101c;
}
.pointer {
  position: absolute;
  left: 18px;
  top: 8px;
  z-index: 3;
}
.palette {
  position: absolute;
  left: 0;
  top: 15px;
  z-index: 1;
  width: 116px;
  background: #fdfdfb;
  border: 1px solid #cfcfcc;
  box-shadow: 1px 2px 3px rgba(0, 0, 0, 0.25);
}
.auto {
  justify-content: flex-start;
  gap: 5px;
  width: 100%;
  height: 20px;
  padding-left: 7px;
  border-bottom: 1px solid #e2e2df;
  color: #777;
}
.auto i {
  width: 13px;
  height: 13px;
  background: #000;
  border: 1px solid #888;
  box-shadow: inset 0 0 0 1px #ccc;
}
.palette h3 {
  margin: 0;
  padding: 5px 0 0 9px;
  font-size: 8px;
  line-height: 11px;
  color: #222;
}
.swatches {
  display: flex;
  justify-content: space-between;
  padding: 6px 3px 0 2px;
}
.swatch {
  width: 8px;
  height: 8px;
  border: 1px solid rgba(120, 120, 120, 0.25);
}
.shades {
  display: flex;
  justify-content: space-between;
  height: 52px;
  padding: 10px 3px 0 2px;
}
.shades div {
  display: flex;
  flex-direction: column;
  width: 8px;
}
.shades button {
  flex: 1;
}
.palette .std {
  margin-top: 8px;
  border-top: 1px solid #e2e2df;
}
.last {
  padding-bottom: 6px;
  border-bottom: 1px solid #e2e2df;
}
.more {
  justify-content: flex-start;
  gap: 6px;
  height: 21px;
  padding-left: 8px;
}
.wrap,
.merge {
  gap: 2px;
}
.wraps {
  height: 48px;
  padding-left: 3px;
  border-left: 1px solid #d2d2cf;
}
.wrap {
  margin-left: 2px;
}
.merge {
  width: 86px;
  height: 15px;
  background: #c6c6c3;
}
.merge .chev {
  margin-left: 5px;
}
.glyph {
  font-size: 12px;
}
.pct {
  margin-left: 3px;
}
.cond {
  width: 58px;
}
.fmt {
  width: 34px;
}
.gallery {
  display: flex;
  margin: 2px 0 0 2px;
  border: 1px solid #d2d2cf;
}
.items {
  display: grid;
  grid-template-columns: repeat(4, 66px);
  grid-auto-rows: 15px;
  gap: 4px;
  padding: 2px 3px 3px 2px;
  background: #fff;
}
.style {
  justify-content: flex-start;
  padding-left: 2px;
  font-size: 9px;
}
.normal {
  background: #fff;
  color: #222;
  box-shadow: 0 0 0 1px #b0b0ad;
}
.bad { background: #f8bccb; color: #a0203c; }
.good { background: #c8f0cd; color: #1e7438; }
.neutral { background: #fdea98; color: #97691a; }
.calculation { background: #f5f5f2; border: 1px solid #888; color: #e07a22; font-weight: 700; }
.check { background: #a3a3a0; border: 2px solid #555; padding-left: 1px; color: #fff; font-weight: 700; }
.explanatory { color: #777; font-style: italic; }
.style.input { background: #f8c796; border: 1px solid #888; color: #55507c; }
.arrows {
  display: flex;
  flex-direction: column;
}
.arrows button {
  flex: 1;
  width: 10px;
  background: #f7f7f4;
  border: 1px solid #c8c8c5;
  border-width: 0 0 1px 1px;
}
.cells .body {
  padding-left: 4px;
}
.cellbtn {
  width: 28px;
}
.edit {
  width: 66px;
  padding-left: 7px;
}
.edit button {
  gap: 3px;
  height: 15px;
}
.autosum .chev {
  margin-left: 4px;
}
.sort {
  width: 32px;
}
.find {
  width: 30px;
}
.idea {
  width: 37px;
}
.collapse {
  margin: auto 5px 3px auto;
}

/* formula bar */
.formulabar {
  display: flex;
  height: 31px;
  flex: none;
  padding: 7px 3px 7px 4px;
  box-shadow: inset 0 2px 3px -1px #c4c4c1;
  font-size: 9px;
}
.formulabar label,
.fx {
  display: flex;
  align-items: center;
  height: 17px;
  background: #fdfdfa;
  border: 1px solid #d4d4d1;
}
.namebox {
  width: 68px;
  padding: 0 4px 0 3px;
}
.namebox input,
.formula input {
  flex: 1;
}
.dots {
  width: 1px;
  height: 9px;
  background: repeating-linear-gradient(#999 0 1px, transparent 1px 4px);
}
.formulabar .dots {
  margin: 4px 9px;
}
.fx {
  width: 74px;
  justify-content: space-around;
}
.fxbtn {
  font: italic 10px "Liberation Serif", serif;
}
.formula {
  flex: 1;
  margin-left: 2px;
  padding: 0 3px 0 6px;
}

/* worksheet */
.workspace {
  display: flex;
  flex: 1;
  min-height: 0;
  border-bottom: 1px solid #9aa89c;
}
.sheet {
  position: relative;
  flex: 1;
  overflow: hidden;
  border-right: 1px solid #b0b0ad;
  background: #fefefb;
}
table {
  table-layout: fixed;
  border-collapse: separate;
  border-spacing: 0;
  font-family: Lato, "Open Sans", sans-serif;
}
.rowhead {
  width: 25px;
}
th,
td {
  padding: 0;
  overflow: hidden;
  white-space: nowrap;
  line-height: 14px;
  border: 0 solid #d9d9d6;
  border-width: 0 1px 1px 0;
}
th {
  background: #e6e6e3;
  color: #333;
  font-size: 12px;
  font-weight: 400;
}
thead th {
  height: 17px;
  border-color: #b5b5b2;
  border-bottom-color: #a5a5a2;
  font-family: "Open Sans", sans-serif;
  font-size: 11px;
}
thead th.sel {
  border-bottom: 1px solid #3b7d57;
}
tbody th {
  border-color: #c4c4c1 #b0b0ad;
}
th.sel {
  background: #d0d0cd;
  color: #2e6e4a;
}
.corner {
  text-align: right;
  line-height: 0;
}
.corner svg {
  fill: #b0b0ad;
  stroke: none;
  margin: 3px 2px 0 0;
}
tbody tr td {
  font-size: 13px;
  color: #222;
}
tbody td.head {
  font-size: 12px;
  font-weight: 700;
  text-align: center;
  color: #000;
}
tbody td.title {
  font-size: 16px;
  font-weight: 700;
  text-align: center;
  color: #44546a;
  border-bottom: 2px solid #5f96c8;
}
tbody td.section {
  font-size: 14px;
  font-weight: 700;
  text-align: center;
  color: #4e8a3c;
}
tbody td.ruled {
  border-bottom: 2px solid #5f96c8;
}
tbody td.selected {
  position: relative;
  overflow: visible;
  font-size: 14px;
  font-weight: 700;
  text-align: center;
  color: #000;
  border: 2px solid #2a6e48;
  border-left-width: 1px;
}
.handle {
  position: absolute;
  right: -3px;
  bottom: -3px;
  width: 5px;
  height: 5px;
  background: #2a6e48;
  border: 1px solid #fff;
  border-width: 1px 0 0 1px;
}
.label {
  padding-left: 2px;
}
.acct {
  display: flex;
  justify-content: space-between;
  padding: 0 6px;
}
.dash .acct {
  padding-right: 20px;
}
td.dark { background: #f9e298; border-color: #fcf1c8; border-bottom-color: #f9e298; }
td.light { background: #fcf0cc; border-color: #fef9e8; border-bottom-color: #fcf0cc; }
td.blue { background: #bcd4e9; border-color: #dce9f4; border-bottom-color: #bcd4e9; }
td.bright { background: #ffff08; border-color: #ffff08; }

/* chart */
.chart {
  display: flex;
  flex-direction: column;
  position: absolute;
  left: 466px;
  top: 86px;
  width: 416px;
  height: 249px;
  margin: 0;
  padding: 8px 12px 0 8px;
  background: #fefefb;
  border: 1px solid #d9d9d6;
  color: #505050;
  font-family: Lato, "Open Sans", sans-serif;
  font-size: 10px;
}
figcaption {
  font-size: 15px;
  line-height: 20px;
  text-align: center;
}
.plotrow {
  display: flex;
  height: 133px;
  margin-top: 14px;
}
.yaxis {
  display: flex;
  flex-direction: column;
  justify-content: space-between;
  width: 43px;
  margin: -5px 13px -5px 0;
  text-align: right;
}
.zero {
  padding-right: 5px;
}
.plot {
  display: flex;
  position: relative;
  flex: 1;
}
.lines {
  display: flex;
  flex-direction: column;
  justify-content: space-between;
  position: absolute;
  inset: 0;
}
.lines i {
  height: 1px;
  background: #dcdcda;
}
.cluster {
  display: flex;
  flex: 1;
  align-items: flex-end;
  justify-content: center;
  gap: 4px;
  position: relative;
}
.cluster b {
  width: 15px;
}
.s0 { background: #5e9bd1; }
.s1 { background: #e07434; }
.s2 { background: #a5a5a2; }
.xaxis {
  display: flex;
  margin: 7px 0 0 56px;
}
.xaxis span {
  flex: 1;
  text-align: center;
}
.legend {
  display: flex;
  justify-content: center;
  gap: 9px;
  margin-top: 12px;
  padding-left: 6px;
  font-size: 9px;
}
.legend span {
  display: flex;
  align-items: center;
  gap: 3px;
}
.legend i {
  width: 6px;
  height: 6px;
}

/* scroll bars */
.vscroll {
  display: flex;
  flex-direction: column;
  width: 11px;
  flex: none;
  margin: 1px 2px 0 1px;
}
.vscroll button,
.hscroll button {
  width: 9px;
  height: 10px;
  background: #fdfdfa;
  border: 1px solid #b8b8b5;
  flex: none;
}
.vscroll button,
.vscroll .track {
  margin-left: 2px;
}
.vscroll svg,
.hscroll svg {
  fill: #555;
  stroke: none;
}
.track {
  flex: 1;
  background: #d8d8d5;
}
.thumb {
  background: #fdfdfa;
  border: 1px solid #b8b8b5;
}
.vscroll .thumb {
  height: 96%;
}
.hscroll .thumb {
  width: 95%;
  height: 100%;
}

/* sheet tabs */
.sheetbar {
  display: flex;
  height: 19px;
  flex: none;
  padding: 0 14px 0 18px;
  border-bottom: 1px solid #d8d8d5;
}
.nav {
  width: 3px;
  margin-right: 15px;
}
.nav svg {
  fill: #b0b0ad;
  stroke: none;
}
.sheettab {
  width: 91px;
  height: 17px;
  margin-left: 13px;
  background: #fff;
  border: 1px solid #c8c8c5;
  border-width: 0 1px 2px;
  border-bottom-color: #3b8058;
  color: #277e47;
  font-size: 9px;
  font-weight: 600;
}
.add {
  margin-left: 22px;
}
.add svg {
  stroke: #666;
}
.sheetbar .dots {
  margin: 5px 11px 0 auto;
}
.hscroll {
  display: flex;
  width: 486px;
  height: 10px;
  margin-top: 4px;
}

/* status bar */
.status {
  display: flex;
  align-items: center;
  height: 14px;
  flex: none;
  padding: 0 5px;
  background: #f2f2ef;
}
.ready {
  margin-right: auto;
}
.view {
  width: 27px;
  height: 14px;
}
.step {
  width: 8px;
  margin-left: 2px;
}
.status input {
  appearance: none;
  width: 68px;
  height: 9px;
  background: linear-gradient(#999, #999) center / 100% 1px no-repeat;
}
.status input::-webkit-slider-thumb {
  appearance: none;
  width: 3px;
  height: 8px;
  background: #555;
}
.status .pct {
  margin-left: 6px;
}

/* taskbar */
.taskbar {
  display: flex;
  height: 27px;
  flex: none;
  background: linear-gradient(90deg, #22363e, #213642 50%, #1e2c42 70%, #1a2444);
  color: #fff;
}
.start {
  width: 32px;
}
.tasksearch {
  display: flex;
  align-items: center;
  gap: 6px;
  width: 229px;
  padding-left: 8px;
  background: #f2f2ef;
  color: #444;
}
.tasksearch input {
  flex: 1;
  font-size: 10px;
}
.tasksearch input::placeholder {
  color: #444;
  opacity: 1;
}
.app {
  width: 27px;
  margin: 0 3px;
  border: solid transparent;
  border-width: 2px 0;
}
.app svg {
  stroke: none;
}
.app text {
  fill: #fff;
  font: 700 8px "Open Sans", sans-serif;
}
.run {
  border-bottom-color: #76b3e0;
}
.active {
  width: 33px;
  margin: 0;
  background: #4a5a64;
}
.tray {
  display: flex;
  align-items: center;
  gap: 6px;
  margin-left: auto;
  padding-right: 3px;
}
.tray svg {
  stroke: #fff;
}
.clock {
  margin-right: 4px;
  line-height: 12px;
  text-align: center;
}
.note {
  margin-right: 13px;
}
</style>
